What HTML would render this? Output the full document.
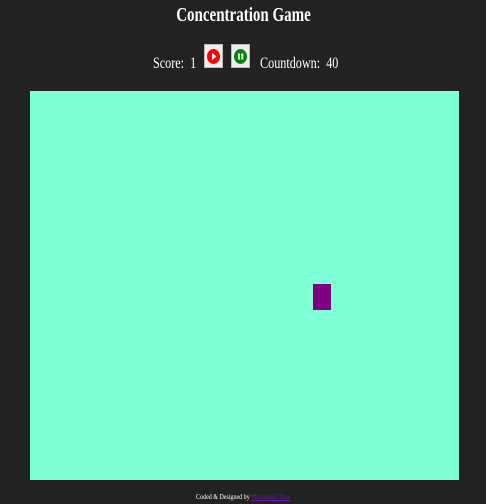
<!DOCTYPE html>
<html><head><style>
body{margin:0;width:486px;height:504px;background:#222;overflow:hidden;font-family:"Liberation Serif",serif;color:#fff;position:relative}
h1{position:absolute;top:4px;left:0;width:486px;text-align:center;margin:0;font-size:20px;font-weight:bold;transform:scaleX(0.75);transform-origin:245px 0}
.t{position:absolute;top:55px;font-size:16px;transform:scaleX(0.76);transform-origin:0 0;white-space:nowrap}
.b{position:absolute;top:44px;width:19px;height:24px;background:#eee;border:1px solid #bbb;box-sizing:border-box}
.c{position:absolute;left:2px;top:4px;width:13px;height:15px;border-radius:50%}
#g{position:absolute;left:30px;top:91px;width:429px;height:389px;background:#7fffd4}
#p{position:absolute;left:313px;top:284px;width:18px;height:26px;background:#800080}
.f{position:absolute;top:493px;left:0;width:486px;text-align:center;font-size:7px;transform:scaleX(0.86);transform-origin:245px 0}
.f a{color:#6a1bb0;text-decoration:underline}
</style></head><body>
<h1>Concentration Game</h1>
<span class="t" style="left:153px">Score:&nbsp; 1</span>
<div class="b" style="left:204px"><div class="c" style="background:#f00"><svg width="13" height="15"><path d="M5 4 L9.5 7.5 L5 11Z" fill="#fff"/></svg></div></div>
<div class="b" style="left:231px"><div class="c" style="background:#080"><svg width="13" height="15"><rect x="4" y="4.5" width="2" height="6" fill="#fff"/><rect x="7.3" y="4.5" width="2" height="6" fill="#fff"/></svg></div></div>
<span class="t" style="left:260px">Countdown:&nbsp; 40</span>
<div id="g"></div><div id="p"></div>
<div class="f">Coded &amp; Designed by <a>Mohamed Okov</a></div>
</body></html>
